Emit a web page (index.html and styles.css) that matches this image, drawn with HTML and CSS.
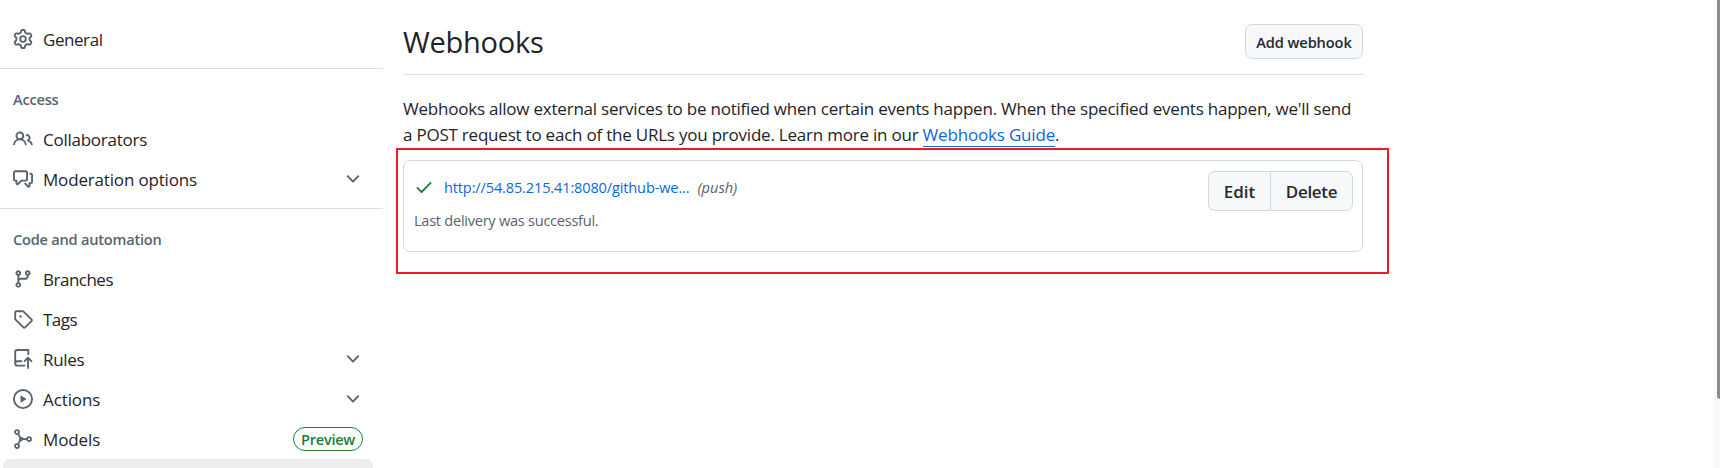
FILE: index.html
```html
<!DOCTYPE html>
<html lang="en">
<head>
<meta charset="utf-8">
<title>Webhooks</title>
<link rel="stylesheet" href="styles.css">
</head>
<body>
<div class="page">
  <nav class="sidebar">
    <ul class="group">
      <li class="item"><svg class="icon" viewBox="0 0 16 16"><path d="M8 0a8.2 8.2 0 0 1 .701.031C9.444.095 9.99.645 10.16 1.29l.288 1.107c.018.066.079.158.212.224.231.114.454.243.668.386.123.082.233.09.299.071l1.103-.303c.644-.176 1.392.021 1.82.63.27.385.506.792.704 1.218.315.675.111 1.422-.364 1.891l-.814.806c-.049.048-.098.147-.088.294.016.257.016.515 0 .772-.01.147.038.246.088.294l.814.806c.475.469.679 1.216.364 1.891a7.977 7.977 0 0 1-.704 1.217c-.428.61-1.176.807-1.82.63l-1.102-.302c-.067-.019-.177-.011-.3.071a5.909 5.909 0 0 1-.668.386c-.133.066-.194.158-.211.224l-.29 1.106c-.168.646-.715 1.196-1.458 1.26a8.006 8.006 0 0 1-1.402 0c-.743-.064-1.289-.614-1.458-1.26l-.289-1.106c-.018-.066-.079-.158-.212-.224a5.738 5.738 0 0 1-.668-.386c-.123-.082-.233-.09-.299-.071l-1.103.303c-.644.176-1.392-.021-1.82-.63a8.12 8.12 0 0 1-.704-1.218c-.315-.675-.111-1.422.363-1.891l.815-.806c.05-.048.098-.147.088-.294a6.214 6.214 0 0 1 0-.772c.01-.147-.038-.246-.088-.294l-.815-.806C.635 6.045.431 5.298.746 4.623a7.92 7.92 0 0 1 .704-1.217c.428-.61 1.176-.807 1.82-.63l1.102.302c.067.019.177.011.3-.071.214-.143.437-.272.668-.386.133-.066.194-.158.211-.224l.29-1.106C6.009.645 6.556.095 7.299.03 7.53.01 7.764 0 8 0Zm-.571 1.525c-.036.003-.108.036-.137.146l-.289 1.105c-.147.561-.549.967-.998 1.189-.173.086-.34.183-.5.29-.417.278-.97.423-1.529.27l-1.103-.303c-.109-.03-.175.016-.195.045-.22.312-.412.644-.573.99-.014.031-.021.11.059.19l.815.806c.411.406.562.957.53 1.456a4.709 4.709 0 0 0 0 .582c.032.499-.119 1.05-.53 1.456l-.815.806c-.081.08-.073.159-.059.19.162.346.353.677.573.989.02.03.085.076.195.046l1.102-.303c.56-.153 1.113-.008 1.53.27.161.107.328.204.501.29.447.222.85.629.997 1.189l.289 1.105c.029.109.101.143.137.146a6.6 6.6 0 0 0 1.142 0c.036-.003.108-.036.137-.146l.289-1.105c.147-.561.549-.967.998-1.189.173-.086.34-.183.5-.29.417-.278.97-.423 1.529-.27l1.103.303c.109.029.175-.016.195-.045.22-.313.411-.644.573-.99.014-.031.021-.11-.059-.19l-.815-.806c-.411-.406-.562-.957-.53-1.456a4.709 4.709 0 0 0 0-.582c-.032-.499.119-1.05.53-1.456l.815-.806c.081-.08.073-.159.059-.19a6.464 6.464 0 0 0-.573-.989c-.02-.03-.085-.076-.195-.046l-1.102.303c-.56.153-1.113.008-1.53-.27a4.44 4.44 0 0 0-.501-.29c-.447-.222-.85-.629-.997-1.189l-.289-1.105c-.029-.11-.101-.143-.137-.146a6.6 6.6 0 0 0-1.142 0ZM11 8a3 3 0 1 1-6 0 3 3 0 0 1 6 0ZM9.5 8a1.5 1.5 0 1 0-3.001.001A1.5 1.5 0 0 0 9.5 8Z"/></svg><span class="label general">General</span></li>
    </ul>
    <h2 class="heading">Access</h2>
    <ul class="group">
      <li class="item"><svg class="icon" viewBox="0 0 16 16"><path d="M2 5.5a3.5 3.5 0 1 1 5.898 2.549 5.508 5.508 0 0 1 3.034 4.084.75.75 0 1 1-1.482.235 4 4 0 0 0-7.9 0 .75.75 0 0 1-1.482-.236A5.507 5.507 0 0 1 3.102 8.05 3.493 3.493 0 0 1 2 5.5ZM11 4a3.001 3.001 0 0 1 2.22 5.018 5.01 5.01 0 0 1 2.56 3.012.749.749 0 0 1-.885.954.752.752 0 0 1-.549-.514 3.507 3.507 0 0 0-2.522-2.372.75.75 0 0 1-.574-.73v-.352a.75.75 0 0 1 .416-.672A1.5 1.5 0 0 0 11 5.5.75.75 0 0 1 11 4Zm-5.5-.5a2 2 0 1 0-.001 3.999A2 2 0 0 0 5.5 3.5Z"/></svg><span class="label collaborators">Collaborators</span></li>
      <li class="item"><svg class="icon" viewBox="0 0 16 16"><path d="M1.75 1h8.5c.966 0 1.75.784 1.75 1.75v5.5A1.75 1.75 0 0 1 10.25 10H7.061l-2.574 2.573A1.458 1.458 0 0 1 2 11.543V10h-.25A1.75 1.75 0 0 1 0 8.25v-5.5C0 1.784.784 1 1.75 1ZM1.5 2.75v5.5c0 .138.112.25.25.25h1a.75.75 0 0 1 .75.75v2.19l2.72-2.72a.749.749 0 0 1 .53-.22h3.5a.25.25 0 0 0 .25-.25v-5.5a.25.25 0 0 0-.25-.25h-8.5a.25.25 0 0 0-.25.25Zm13 2a.25.25 0 0 0-.25-.25h-.5a.75.75 0 0 1 0-1.5h.5c.966 0 1.75.784 1.75 1.75v5.5A1.75 1.75 0 0 1 14.25 12H14v1.543a1.458 1.458 0 0 1-2.487 1.03L9.22 12.28a.749.749 0 0 1 .326-1.275.749.749 0 0 1 .734.215l2.22 2.22v-2.19a.75.75 0 0 1 .75-.75h1a.25.25 0 0 0 .25-.25Z"/></svg><span class="label moderation">Moderation options</span><svg class="icon chevron" viewBox="0 0 16 16"><path d="M12.78 5.22a.749.749 0 0 1 0 1.06l-4.25 4.25a.749.749 0 0 1-1.06 0L3.22 6.28a.749.749 0 1 1 1.06-1.06L8 8.939l3.72-3.719a.749.749 0 0 1 1.06 0Z"/></svg></li>
    </ul>
    <h2 class="heading">Code and automation</h2>
    <ul class="group">
      <li class="item"><svg class="icon" viewBox="0 0 16 16"><path d="M9.5 3.25a2.25 2.25 0 1 1 3 2.122V6A2.5 2.5 0 0 1 10 8.5H6a1 1 0 0 0-1 1v1.128a2.251 2.251 0 1 1-1.5 0V5.372a2.25 2.25 0 1 1 1.5 0v1.836A2.493 2.493 0 0 1 6 7h4a1 1 0 0 0 1-1v-.628A2.25 2.25 0 0 1 9.5 3.25Zm-6 0a.75.75 0 1 0 1.5 0 .75.75 0 0 0-1.5 0Zm8.25-.75a.75.75 0 1 0 0 1.5.75.75 0 0 0 0-1.5ZM4.25 12a.75.75 0 1 0 0 1.5.75.75 0 0 0 0-1.5Z"/></svg><span class="label branches">Branches</span></li>
      <li class="item"><svg class="icon" viewBox="0 0 16 16"><path d="M1 7.775V2.75C1 1.784 1.784 1 2.75 1h5.025c.464 0 .91.184 1.238.513l6.25 6.25a1.75 1.75 0 0 1 0 2.474l-5.026 5.026a1.75 1.75 0 0 1-2.474 0l-6.25-6.25A1.752 1.752 0 0 1 1 7.775Zm1.5 0c0 .066.026.13.073.177l6.25 6.25a.25.25 0 0 0 .354 0l5.025-5.025a.25.25 0 0 0 0-.354l-6.25-6.25a.25.25 0 0 0-.177-.073H2.75a.25.25 0 0 0-.25.25ZM6 5a1 1 0 1 1 0 2 1 1 0 0 1 0-2Z"/></svg><span class="label tags">Tags</span></li>
      <li class="item"><svg class="icon" viewBox="0 0 16 16"><path d="M1 2.5A2.5 2.5 0 0 1 3.5 0h8.75a.75.75 0 0 1 .75.75v3.5a.75.75 0 0 1-1.5 0V1.5h-8a1 1 0 0 0-1 1v6.708A2.493 2.493 0 0 1 3.5 9h3.25a.75.75 0 0 1 0 1.5H3.5a1 1 0 0 0 0 2h5.75a.75.75 0 0 1 0 1.5H3.5A2.5 2.5 0 0 1 1 11.5Zm13.23 7.79-1.48-1.48v6.44a.75.75 0 0 1-1.5 0V8.81l-1.48 1.48a.751.751 0 0 1-1.042-.018.751.751 0 0 1-.018-1.042l2.75-2.75a.75.75 0 0 1 1.06 0l2.75 2.75a.749.749 0 0 1-.326 1.275.749.749 0 0 1-.734-.215Z"/></svg><span class="label rules">Rules</span><svg class="icon chevron" viewBox="0 0 16 16"><path d="M12.78 5.22a.749.749 0 0 1 0 1.06l-4.25 4.25a.749.749 0 0 1-1.06 0L3.22 6.28a.749.749 0 1 1 1.06-1.06L8 8.939l3.72-3.719a.749.749 0 0 1 1.06 0Z"/></svg></li>
      <li class="item"><svg class="icon" viewBox="0 0 16 16"><path d="M8 0a8 8 0 1 1 0 16A8 8 0 0 1 8 0ZM1.5 8a6.5 6.5 0 1 0 13 0 6.5 6.5 0 0 0-13 0Zm4.879-2.773 4.264 2.559a.25.25 0 0 1 0 .428l-4.264 2.559A.25.25 0 0 1 6 10.559V5.442a.25.25 0 0 1 .379-.215Z"/></svg><span class="label actions">Actions</span><svg class="icon chevron" viewBox="0 0 16 16"><path d="M12.78 5.22a.749.749 0 0 1 0 1.06l-4.25 4.25a.749.749 0 0 1-1.06 0L3.22 6.28a.749.749 0 1 1 1.06-1.06L8 8.939l3.72-3.719a.749.749 0 0 1 1.06 0Z"/></svg></li>
      <li class="item"><svg class="icon stroked" viewBox="0 0 16 16"><circle cx="3.2" cy="2.4" r="1.6"/><circle cx="3.2" cy="13.6" r="1.6"/><circle cx="12.9" cy="8" r="1.6"/><path d="M4 3.9 5.6 6.6M4 12.1l1.6-2.7M8.2 8h3M5.6 6.5v3L8.2 8Z"/></svg><span class="label models">Models</span><span class="badge">Preview</span></li>
      <li class="item current"></li>
    </ul>
  </nav>
  <main class="content">
    <header class="subhead">
      <h1 class="title">Webhooks</h1>
      <button class="btn small">Add webhook</button>
    </header>
    <p class="intro">Webhooks allow external services to be notified when certain events happen. When the specified events happen, we'll send<br>a POST request to each of the URLs you provide. Learn more in our <a class="guide">Webhooks Guide</a>.</p>
    <section class="card">
      <div class="hook">
        <div class="hook-line"><svg class="icon check" viewBox="0 0 16 16"><path d="M13.78 4.22a.75.75 0 0 1 0 1.06l-7.25 7.25a.75.75 0 0 1-1.06 0L2.22 9.28a.751.751 0 0 1 .018-1.042.751.751 0 0 1 1.042-.018L6 10.94l6.72-6.72a.75.75 0 0 1 1.06 0Z"/></svg><a class="url">http://54.85.215.41:8080/github-we...</a><em class="push">(push)</em></div>
        <p class="status">Last delivery was successful.</p>
      </div>
      <div class="btn-group"><button class="btn">Edit</button><button class="btn delete">Delete</button></div>
    </section>
  </main>
  <div class="highlight"></div>
  <div class="scrollbar"><div class="thumb"></div></div>
</div>
</body>
</html>
```
FILE: styles.css
```css
* { box-sizing: border-box; }
body {
  margin: 0;
  background: #fff;
  color: #1f2328;
  font-family: "Open Sans", "Noto Sans", sans-serif;
  font-size: 17px;
}
.page { position: relative; display: flex; height: 468px; overflow: hidden; }
.sidebar { width: 383px; padding-top: 19px; flex: none; }
.group { list-style: none; margin: 0; padding: 0; }
.item { display: flex; align-items: center; height: 40px; padding: 0 20px 0 13px; }
.label { margin-left: 10px; flex: none; white-space: nowrap; letter-spacing: -0.2px; }
.general { letter-spacing: -0.44px; }
.collaborators { letter-spacing: -0.25px; }
.moderation { letter-spacing: -0.17px; }
.branches { letter-spacing: -0.5px; }
.tags { letter-spacing: -0.55px; }
.rules { letter-spacing: -0.3px; }
.actions, .models { letter-spacing: -0.1px; }
.icon { width: 20px; height: 20px; fill: #59636e; flex: none; }
.stroked { fill: none; stroke: #59636e; stroke-width: 1.4; }
.chevron { margin-left: auto; }
.heading {
  margin: 9px 0 0;
  height: 51px;
  padding: 20px 0 0 13px;
  border-top: 1px solid #d9e0e7;
  font-size: 14.6px;
  line-height: 20px;
  font-weight: 600;
  letter-spacing: -0.23px;
  color: #59636e;
}
.badge {
  margin-left: auto;
  height: 24px;
  width: 70px;
  border: 1px solid #1a7f37;
  border-radius: 12px;
  color: #1a7f37;
  font-size: 14.6px;
  font-weight: 600;
  letter-spacing: -0.3px;
  line-height: 22px;
  text-align: center;
}
.current { margin: 0 10px 0 3px; background: #ecedef; border-radius: 7px; }
.content { width: 960px; margin-left: 20px; flex: none; }
.subhead { display: flex; justify-content: space-between; height: 75px; padding-top: 24px; border-bottom: 1px solid #dadee3; }
.title { margin: 0; font-size: 29px; line-height: 36px; font-weight: 400; letter-spacing: -0.25px; }
.btn {
  font: 600 17px "Open Sans", "Noto Sans", sans-serif;
  color: #25292e;
  background: #f6f8fa;
  border: 1px solid #d1d9e0;
  border-radius: 7px;
  padding: 0;
  height: 40px;
  white-space: nowrap;
}
.small { width: 118px; height: 35px; font-size: 14.6px; letter-spacing: -0.1px; }
.intro { margin: 21px 0 0; line-height: 26px; white-space: nowrap; letter-spacing: -0.22px; }
.guide { color: #0969da; border-bottom: 1px solid #0969da; letter-spacing: -0.18px; }
.card { display: flex; justify-content: space-between; height: 92px; margin-top: 12px; border: 1px solid #d1d9e0; border-radius: 7px; padding: 10px 9px 0 10px; }
.hook-line { display: flex; align-items: center; height: 32px; font-size: 14.6px; }
.check { fill: #1a7f37; }
.url { color: #0969da; margin-left: 10px; letter-spacing: -0.16px; }
.push { color: #59636e; margin-left: 8px; }
.status { margin: 0; font-size: 14.6px; line-height: 34px; letter-spacing: -0.27px; color: #59636e; }
.btn-group { display: flex; }
.btn-group .btn:first-child { width: 62px; border-radius: 7px 0 0 7px; border-right: 0; }
.btn-group .btn:last-child { width: 83px; border-radius: 0 7px 7px 0; }
.delete { letter-spacing: -0.3px; }
.highlight { position: absolute; left: 396px; top: 148px; width: 993px; height: 126px; border: 2px solid #ed1c24; }
.scrollbar { margin-left: auto; width: 7px; background: #fafafa; padding-left: 4px; }
.thumb { height: 399px; background: #8b8b8b; border-bottom-left-radius: 3px; }
```
